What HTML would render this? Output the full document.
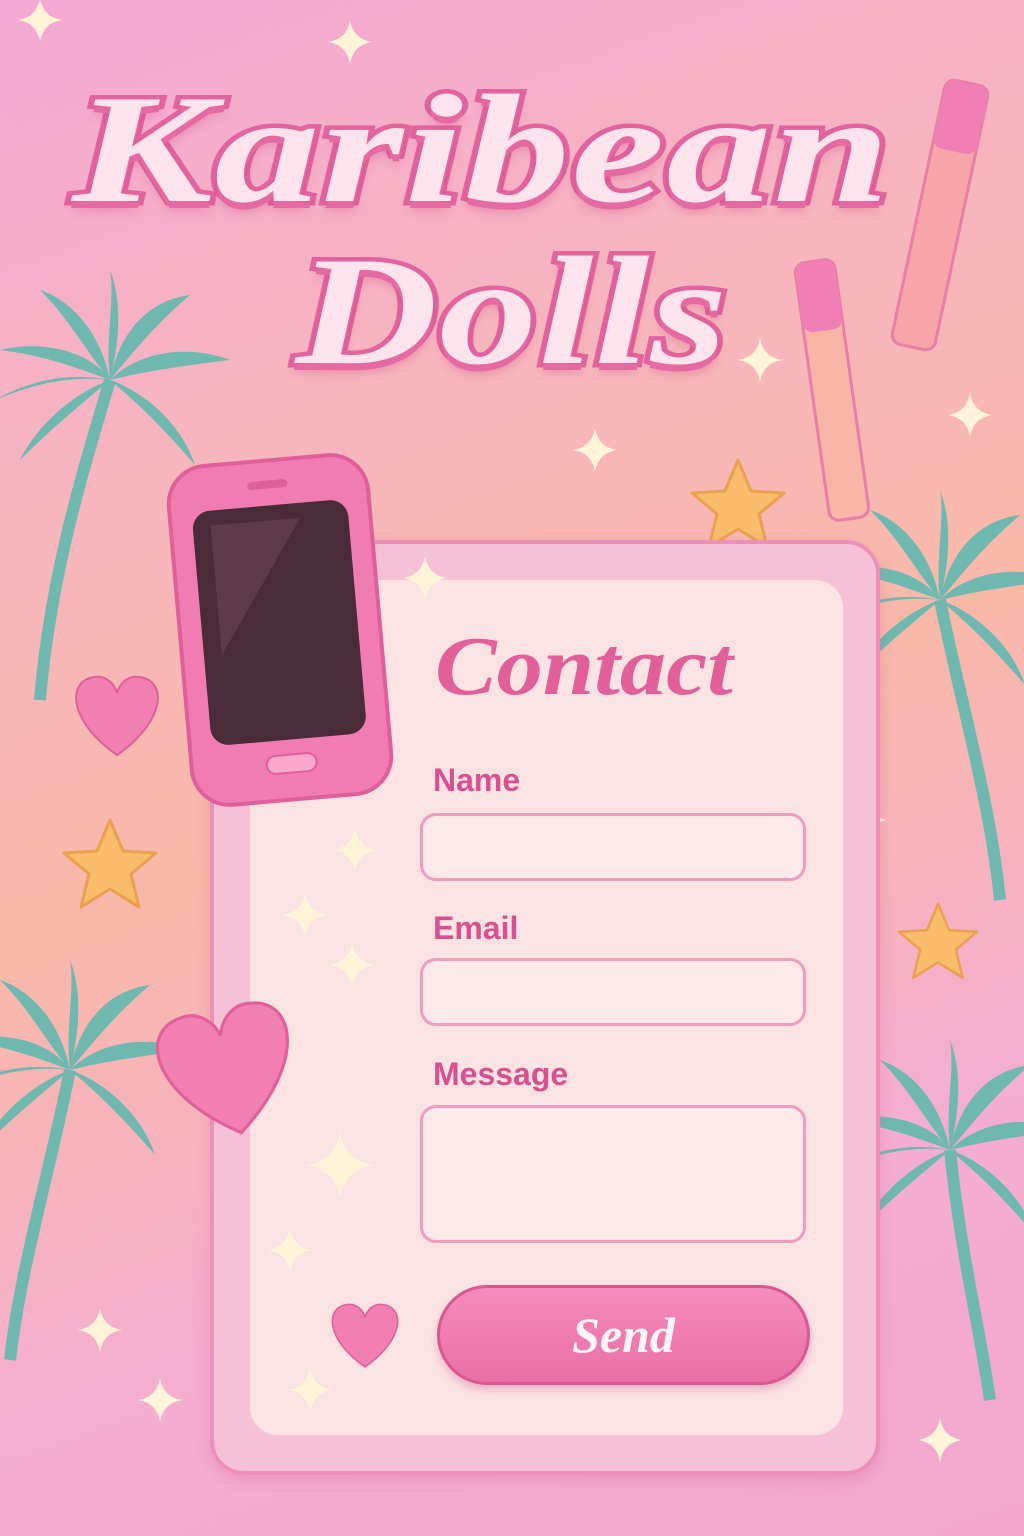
<!DOCTYPE html>
<html><head><meta charset="utf-8"><style>
*{margin:0;padding:0;box-sizing:border-box}
body{width:1024px;height:1536px;overflow:hidden;position:relative;font-family:"Liberation Sans",sans-serif;
background:linear-gradient(160deg,#f4a8d4 0%,#f7b6bc 30%,#f8b8a8 50%,#f4aed0 75%,#f2a6cc 100%)}
.abs{position:absolute}
.title{position:absolute;width:1024px;text-align:center;font-family:"Liberation Serif",serif;font-style:italic;font-weight:bold;color:#fde4ec;
-webkit-text-stroke:9px #e2649e;paint-order:stroke fill;text-shadow:0 7px 0 #e56aa2,0 10px 8px rgba(200,60,120,.3);letter-spacing:1px}
.card{left:210px;top:540px;width:670px;height:935px;border-radius:34px;background:#f6c1d6;border:4px solid #ec90b8;box-shadow:0 6px 14px rgba(210,90,140,.25)}
.inner{left:250px;top:580px;width:593px;height:855px;border-radius:28px;background:#fbe3e4}
.lbl{position:absolute;left:433px;font-size:32px;color:#d9508e;font-weight:bold}
.inp{position:absolute;left:420px;width:386px;border:3px solid #ee9cc0;border-radius:16px;background:#fde8ea}
</style></head><body>
<svg class="abs" style="left:0;top:0" width="1024" height="1536">
<defs>
<g id="palm" fill="#6fb8b0">
<path d="M0 0 C-20 -30 -70 -40 -110 -30 C-70 -25 -40 -15 0 0Z"/>
<path d="M0 0 C-10 -50 -40 -80 -70 -90 C-40 -60 -25 -30 0 0Z"/>
<path d="M0 0 C10 -50 40 -80 80 -85 C45 -55 25 -30 0 0Z"/>
<path d="M0 0 C30 -30 80 -35 120 -20 C80 -15 40 -10 0 0Z"/>
<path d="M0 0 C-30 10 -70 40 -90 80 C-60 50 -30 25 0 0Z"/>
<path d="M0 0 C30 10 70 40 85 85 C55 50 30 25 0 0Z"/>
<path d="M0 0 C-5 -40 5 -80 0 -110 C12 -80 10 -40 0 0Z"/>
<path d="M0 0 C-40 -5 -80 5 -115 20 C-80 0 -40 -8 0 0Z"/>
<path d="M0 0 C40 -5 80 5 115 25 C80 5 40 -5 0 0Z"/>
</g>
<g id="star"><path d="M0 -45 L13 -14 L46 -12 L21 9 L29 42 L0 24 L-29 42 L-21 9 L-46 -12 L-13 -14Z" fill="#f8bc6a" stroke="#eaa050" stroke-width="3" stroke-linejoin="round"/></g>
<g id="heart"><path d="M0 40 C-50 5 -50 -35 -22 -38 C-10 -40 -2 -30 0 -22 C2 -30 10 -40 22 -38 C50 -35 50 5 0 40Z" fill="#f27fb2" stroke="#e0609a" stroke-width="2"/></g>
<g id="sp" fill="#fff4d8"><path d="M0 -22 Q3 -3 22 0 Q3 3 0 22 Q-3 3 -22 0 Q-3 -3 0 -22Z"/></g>
</defs>
<path d="M110 380 C80 480 50 580 40 700" stroke="#6fb8b0" stroke-width="12" fill="none"/>
<use href="#palm" x="110" y="380"/>
<path d="M70 1070 C50 1170 20 1270 10 1360" stroke="#6fb8b0" stroke-width="12" fill="none"/>
<use href="#palm" x="70" y="1070"/>
<path d="M940 600 C960 700 990 800 1000 900" stroke="#6fb8b0" stroke-width="12" fill="none"/>
<use href="#palm" x="940" y="600"/>
<path d="M950 1150 C960 1250 980 1330 990 1400" stroke="#6fb8b0" stroke-width="12" fill="none"/>
<use href="#palm" x="950" y="1150"/>
<g transform="translate(940 215) rotate(12)"><rect x="-22" y="-135" width="44" height="270" rx="10" fill="#f7a5a8" stroke="#e97ea6" stroke-width="3"/><rect x="-22" y="-135" width="44" height="70" rx="10" fill="#ef7fb4"/></g>
<g transform="translate(832 390) rotate(-8)"><rect x="-20" y="-130" width="40" height="260" rx="10" fill="#f9b5a8" stroke="#e97ea6" stroke-width="3"/><rect x="-20" y="-130" width="40" height="70" rx="10" fill="#ef7fb4"/></g>
<use href="#star" x="738" y="505"/><use href="#star" x="110" y="865"/><use href="#star" x="938" y="942" transform="translate(938 942) scale(.85) translate(-938 -942)"/>
<use href="#heart" x="117" y="715"/>
<use href="#sp" x="40" y="20"/><use href="#sp" x="350" y="42"/><use href="#sp" x="595" y="450"/><use href="#sp" x="760" y="360"/><use href="#sp" x="970" y="415"/><use href="#sp" x="100" y="1330"/><use href="#sp" x="940" y="1440"/><use href="#sp" x="160" y="1400"/><use href="#sp" x="865" y="820"/>
</svg>
<div class="title" style="top:60px;left:-30px;font-size:155px;transform:scaleX(1.36)">Karibean</div>
<div class="title" style="top:222px;font-size:155px;transform:scaleX(1.27)">Dolls</div>
<div class="abs card"></div>
<div class="abs inner"></div>
<svg class="abs" style="left:0;top:0" width="1024" height="1536">
<use href="#sp" x="355" y="850"/><use href="#sp" x="305" y="915"/><use href="#sp" x="352" y="965"/><use href="#sp" x="340" y="1165" transform="translate(340 1165) scale(1.5) translate(-340 -1165)"/><use href="#sp" x="290" y="1250"/><use href="#sp" x="310" y="1390"/><use href="#sp" x="425" y="578"/>
<use href="#heart" x="365" y="1335" transform="translate(365 1335) scale(.8) translate(-365 -1335)"/>
<use href="#heart" x="228" y="1070" transform="translate(228 1070) rotate(-12) scale(1.6) translate(-228 -1070)"/>
<g transform="translate(280 630) rotate(-5)">
<rect x="-100" y="-170" width="200" height="340" rx="38" fill="#f07cb2" stroke="#de5f99" stroke-width="4"/>
<rect x="-78" y="-125" width="156" height="235" rx="18" fill="#4a2c38"/>
<path d="M-60 -110 L30 -110 L-60 20Z" fill="#6a4656" opacity=".6"/>
<rect x="-25" y="125" width="50" height="18" rx="9" fill="#f9a9cc" stroke="#de5f99" stroke-width="2"/>
<rect x="-20" y="-150" width="40" height="8" rx="4" fill="#de5f99"/>
</g>
</svg>
<div class="abs" style="left:435px;top:618px;font-family:'Liberation Serif',serif;font-style:italic;font-weight:bold;font-size:84px;color:#e2609a;transform:scaleX(1.1);transform-origin:left">Contact</div>
<div class="lbl" style="top:762px">Name</div>
<div class="inp" style="top:813px;height:68px"></div>
<div class="lbl" style="top:910px">Email</div>
<div class="inp" style="top:958px;height:68px"></div>
<div class="lbl" style="top:1056px">Message</div>
<div class="inp" style="top:1105px;height:138px"></div>
<div class="abs" style="left:437px;top:1285px;width:373px;height:100px;border-radius:50px;background:linear-gradient(#f48cba,#ea6ea5);border:3px solid #d8588f;box-shadow:0 5px 8px rgba(200,70,130,.3);text-align:center;line-height:94px;font-family:'Liberation Serif',serif;font-style:italic;font-weight:bold;font-size:50px;color:#fff4f6">Send</div>
</body></html>
